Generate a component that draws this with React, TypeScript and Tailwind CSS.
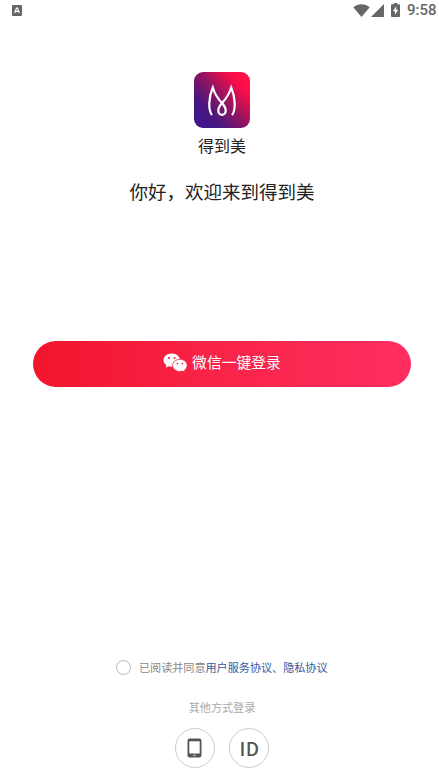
import React, { useState } from 'react';

function StatusBar() {
  return (
    <div className="flex h-5 w-full items-center justify-between pl-3 pr-[3px] text-[#666666]">
      <svg width="10" height="11" viewBox="0 0 10 11" className="shrink-0">
        <rect width="10" height="11" rx="1" fill="#666666" />
        <path d="M2.6 8 4.500 3h1l1.900 5M3.500 6.400h3" fill="none" stroke="#fff" strokeWidth="1.2" />
      </svg>
      <div className="flex items-center">
        <svg width="17" height="13" viewBox="0 0 17 13" fill="currentColor">
          <path d="M.3 3.2C5-.8 12-.8 16.7 3.2L8.5 13z" />
        </svg>
        <svg width="13" height="13" viewBox="0 0 13 13" fill="currentColor" className="ml-px">
          <path d="M13 0v13H0z" />
        </svg>
        <svg width="9" height="14" viewBox="0 0 9 14" fill="currentColor" className="ml-[7px]">
          <path d="M2.8 0h3.4v1.3h1.9q.9 0 .9.9v10.9q0 .9-.9.9H.9Q0 14 0 13.100V2.200q0-.9.9-.9h1.900z" />
          <path d="M5.200 3.300 2 8.200h2v3.600l3.200-5h-2z" fill="#fff" />
        </svg>
        <span className="ml-[7px] w-[29px] whitespace-nowrap font-['Roboto',sans-serif] text-[15px] font-medium leading-5">9:58</span>
      </div>
    </div>
  );
}

function Logo() {
  return (
    <svg width="56" height="56" viewBox="0 0 56 56">
      <defs>
        <linearGradient id="logo-bg" x1="6" y1="46" x2="48" y2="8" gradientUnits="userSpaceOnUse">
          <stop offset="0" stopColor="#40168a" />
          <stop offset="0.2" stopColor="#4c167f" />
          <stop offset="0.55" stopColor="#97145f" />
          <stop offset="0.88" stopColor="#f40e4c" />
          <stop offset="1" stopColor="#ff1048" />
        </linearGradient>
      </defs>
      <rect width="56" height="56" rx="9" fill="url(#logo-bg)" />
      <g fill="none" stroke="#fff" strokeWidth="2.2" strokeLinejoin="miter" strokeMiterlimit="8">
        <path d="M18 43.200C14 38 14.500 25.500 18.800 15.500C20.500 21 23.500 26.500 28 31C32.500 26.500 35.500 21 37.200 15.500C41.500 25.500 42 38 38 43.200" />
        <path d="M28 31C25.500 34 24.300 36 24.300 38.400C24.300 41 26 42.800 28 42.800C30 42.800 31.700 41 31.700 38.400C31.700 36 30.500 34 28 31Z" />
      </g>
    </svg>
  );
}

function WechatIcon() {
  return (
    <svg width="25" height="20" viewBox="0 0 25 20" className="mt-px">
      <path d="M8.700.5C4 .5.500 3.400.500 7.100c0 2.200 1.100 4 3 5.200l-.8 2.400 2.900-1.500c1 .3 2 .5 3.100.5C13.300 13.700 17 10.800 17 7.100S13.300.500 8.700.500z" fill="#fff" />
      <path d="M16.900 6.300c-4 0-7.300 2.700-7.300 6.100s3.300 6.100 7.300 6.100c.9 0 1.800-.1 2.600-.4l2.500 1.300-.7-2.100c1.700-1.100 2.900-2.900 2.900-4.900 0-3.400-3.300-6.100-7.300-6.100z" fill="#fff" stroke="#fa2042" strokeWidth=".8" />
      <g fill="#fa2042">
        <circle cx="5.900" cy="5" r="1.100" />
        <circle cx="11.600" cy="5" r="1.100" />
        <circle cx="14.500" cy="10.600" r=".9" />
        <circle cx="19.300" cy="10.600" r=".9" />
      </g>
    </svg>
  );
}

function TabletIcon() {
  return (
    <svg width="15" height="20" viewBox="0 0 15 20" className="-ml-px">
      <rect x=".5" y=".5" width="14" height="19" rx="2.300" fill="#555555" />
      <rect x="2.300" y="3.300" width="10.400" height="12.200" fill="#fff" />
      <circle cx="7.500" cy="17.500" r="1.100" fill="#bbbbbb" />
    </svg>
  );
}

export default function App() {
  const [agreed, setAgreed] = useState(false);

  return (
    <div className="flex h-[782px] w-[439px] flex-col overflow-hidden bg-white font-['Noto_Sans_CJK_SC',sans-serif]">
      <StatusBar />
      <main className="flex flex-1 flex-col items-center pl-[5px] pt-[52px]">
        <Logo />
        <div className="mt-[5px] text-base leading-6 text-[#222222]">得到美</div>
        <h1 className="mt-5 whitespace-nowrap text-[18.5px] leading-7 text-[#222222]">你好，欢迎来到得到美</h1>

        <button className="mt-[135.500px] flex h-[46px] w-[378px] items-center justify-center gap-1 rounded-full bg-linear-to-r from-[#f2142b] to-[#ff2e60] pb-[2px] text-[14.800px] leading-5 text-white">
          <WechatIcon />
          <span className="-mt-px">微信一键登录</span>
        </button>

        <div className="mt-auto flex items-center text-[11.100px] leading-4 text-[#888888]">
          <button
            onClick={() => setAgreed(!agreed)}
            className={`mr-[7.5px] h-[15px] w-[15px] rounded-full border border-[#b4b4b4] ${agreed ? 'bg-[#3b5998]' : 'bg-white'}`}
          />
          <span>已阅读并同意</span>
          <span className="text-[#3856a0]">用户服务协议、隐私协议</span>
        </div>

        <div className="mt-6 text-[11.100px] leading-4 text-[#aaaaaa]">其他方式登录</div>
        <div className="mb-[14px] mr-px mt-[13px] flex gap-[14px]">
          <button className="flex h-10 w-10 items-center justify-center rounded-full border border-[#cccccc]">
            <TabletIcon />
          </button>
          <button className="flex h-10 w-10 items-center justify-center rounded-full border border-[#cccccc] pl-0.5 font-['Noto_Sans_CJK_SC',sans-serif] text-[19px] font-medium leading-5 tracking-[0.3px] text-[#555555]">
            ID
          </button>
        </div>
      </main>
    </div>
  );
}
